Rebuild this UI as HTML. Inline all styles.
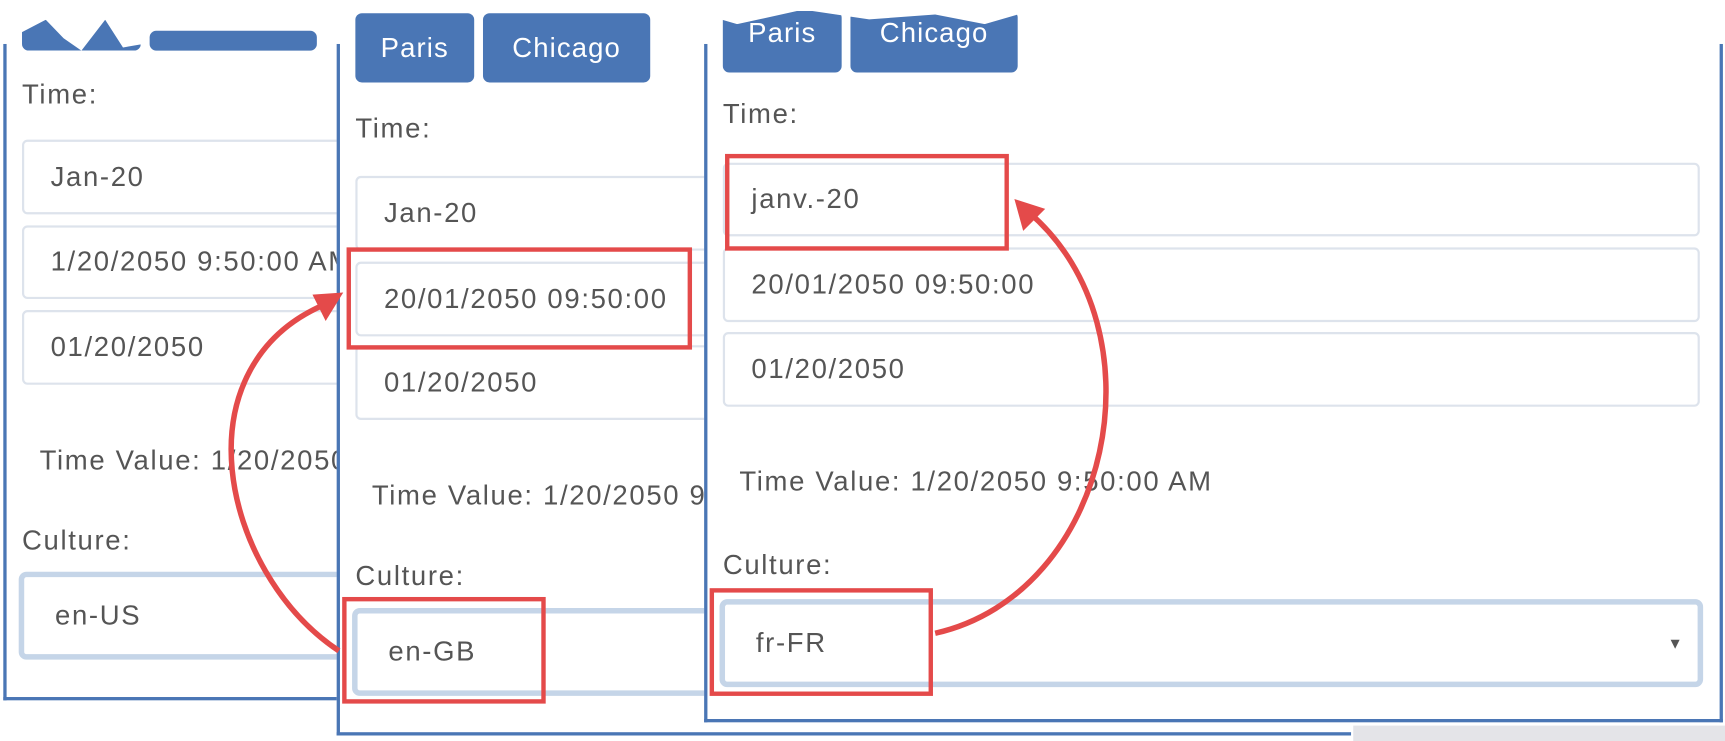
<!DOCTYPE html>
<html><head><meta charset="utf-8"><style>
html,body{margin:0;padding:0;background:#fff;width:1725px;height:741px;overflow:hidden}
#w{position:absolute;left:0;top:0;width:1568px;height:674px;transform:scale(1.1002,1.0994);transform-origin:0 0;font-family:"Liberation Sans",sans-serif;color:#555}
.a{position:absolute}
.p{position:absolute;background:#fff;border-left:3px solid #4a76b5;border-bottom:3px solid #4a76b5;overflow:hidden}
.tab{position:absolute;background:#4a76b5;color:#fff;border-radius:6px;font-size:25px;letter-spacing:1px;text-align:center;box-sizing:border-box}
.lbl{position:absolute;font-size:25px;letter-spacing:1.5px;color:#555;white-space:nowrap}
.in{position:absolute;border:2px solid #dde3ec;border-radius:5px;background:#fff;box-sizing:border-box;font-size:25px;letter-spacing:1.5px;color:#555;padding-left:24px;display:flex;align-items:center;white-space:nowrap;overflow:hidden}
.sel{position:absolute;border:5px solid #c5d5e8;border-radius:7px;background:#fff;box-sizing:border-box;font-size:25px;letter-spacing:1.5px;color:#555;padding-left:28px;display:flex;align-items:center}
.r{position:absolute;border:4px solid #e44a4a;box-sizing:border-box}
</style></head><body><div id="w">
<!-- panel 1 -->
<div class="p" style="left:3px;top:40px;width:320px;height:594px"></div>
<div class="tab" style="left:20px;top:18px;width:108px;height:28px;clip-path:polygon(0 40%,20% 0,35% 60%,50% 100%,70% 0,85% 90%,100% 80%,100% 100%,0 100%)"></div>
<div class="tab" style="left:136px;top:28px;width:152px;height:18px"></div>
<div class="lbl" style="left:20px;top:72px">Time:</div>
<div class="in" style="left:20px;top:127px;width:300px;height:68px">Jan-20</div>
<div class="in" style="left:20px;top:205px;width:300px;height:67px">1/20/2050 9:50:00 AM</div>
<div class="in" style="left:20px;top:282px;width:300px;height:68px">01/20/2050</div>
<div class="lbl" style="left:36px;top:405px">Time Value: 1/20/2050</div>
<div class="lbl" style="left:20px;top:478px">Culture:</div>
<div class="sel" style="left:17px;top:520px;width:300px;height:80px">en-US</div>
<!-- panel 2 -->
<div class="p" style="left:306px;top:40px;width:919px;height:626px"></div>
<div class="tab" style="left:323px;top:12px;width:108px;height:63px;padding-top:18px">Paris</div>
<div class="tab" style="left:439px;top:12px;width:152px;height:63px;padding-top:18px">Chicago</div>
<div class="lbl" style="left:323px;top:103px">Time:</div>
<div class="in" style="left:323px;top:160px;width:330px;height:68px">Jan-20</div>
<div class="in" style="left:323px;top:238px;width:330px;height:68px">20/01/2050 09:50:00</div>
<div class="in" style="left:323px;top:314px;width:330px;height:68px">01/20/2050</div>
<div class="lbl" style="left:338px;top:437px">Time Value: 1/20/2050 9</div>
<div class="lbl" style="left:323px;top:510px">Culture:</div>
<div class="sel" style="left:320px;top:553px;width:330px;height:80px">en-GB</div>
<div class="a" style="left:1230px;top:660px;width:338px;height:14px;background:#e4e4e8"></div>
<!-- panel 3 -->
<div class="p" style="left:640px;top:40px;width:920px;height:614px;border-right:3px solid #4a76b5"></div>
<div class="tab" style="left:657px;top:10px;width:108px;height:56px;padding-top:6px">Paris</div>
<div class="tab" style="left:773px;top:10px;width:152px;height:56px;padding-top:6px">Chicago</div>
<div class="a" style="left:640px;top:0;width:300px;height:22px;background:#fff;clip-path:polygon(0 0,100% 0,100% 40%,85% 100%,70% 60%,50% 80%,30% 40%,10% 100%,0 60%)"></div>
<div class="lbl" style="left:657px;top:90px">Time:</div>
<div class="in" style="left:657px;top:148px;width:888px;height:67px">janv.-20</div>
<div class="in" style="left:657px;top:225px;width:888px;height:68px">20/01/2050 09:50:00</div>
<div class="in" style="left:657px;top:302px;width:888px;height:68px">01/20/2050</div>
<div class="lbl" style="left:672px;top:424px">Time Value: 1/20/2050 9:50:00 AM</div>
<div class="lbl" style="left:657px;top:500px">Culture:</div>
<div class="sel" style="left:654px;top:545px;width:894px;height:80px">fr-FR<span style="position:absolute;right:12px;font-size:14px;color:#555">▼</span></div>
<!-- red boxes -->
<div class="r" style="left:315px;top:225px;width:314px;height:93px"></div>
<div class="r" style="left:311px;top:543px;width:185px;height:97px"></div>
<div class="r" style="left:659px;top:140px;width:258px;height:88px"></div>
<div class="r" style="left:645px;top:535px;width:203px;height:98px"></div>
<svg class="a" style="left:0;top:0" width="1568" height="674">
<path d="M308 592 C200 520 160 330 300 275" fill="none" stroke="#e44a4a" stroke-width="5"/>
<polygon points="312,266 284,268 296,292" fill="#e44a4a"/>
<path d="M850 576 C1010 540 1060 300 935 193" fill="none" stroke="#e44a4a" stroke-width="5"/>
<polygon points="922,181 950,190 930,210" fill="#e44a4a"/>
</svg>
</div></body></html>
